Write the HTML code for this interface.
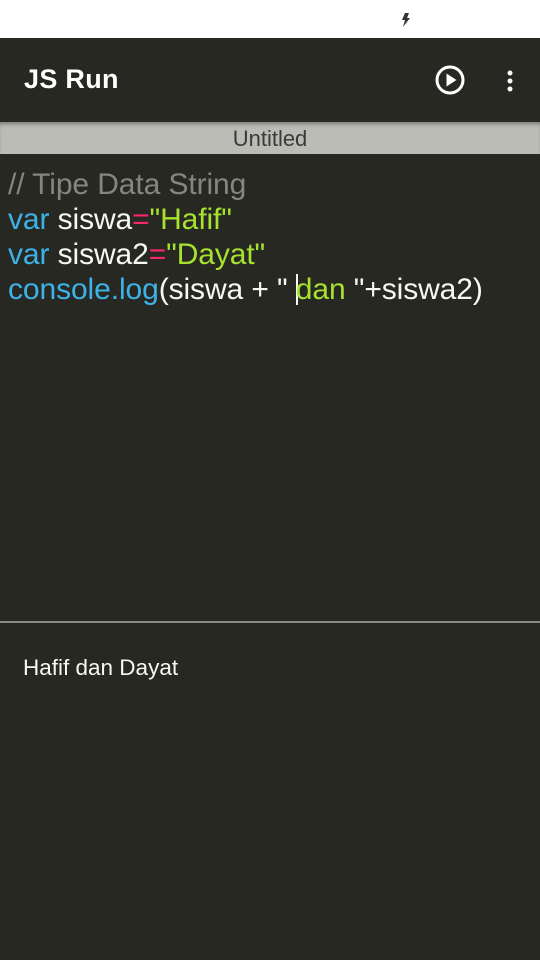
<!DOCTYPE html>
<html><head><style>
body{margin:0;width:540px;height:960px;background:#272822;font-family:"Liberation Sans",sans-serif;overflow:hidden;position:relative}
.status{position:absolute;top:0;left:0;width:540px;height:38px;background:#fff}
.bar{position:absolute;top:38px;left:0;width:540px;height:84px;background:#272822}
.title{position:absolute;left:24px;top:64px;color:#fff;font-size:27px;font-weight:bold;letter-spacing:0.3px}
.tab{position:absolute;top:122px;left:0;width:540px;height:32px;background:#bbbcb6;color:#3a3a3a;font-size:22px;text-align:center;line-height:34px;box-shadow:inset 0 4px 4px -2px rgba(0,0,0,.35)}
.code{position:absolute;left:8px;top:167px;font-size:30px;line-height:35px;color:#f8f8f2;white-space:pre;letter-spacing:-0.1px}
.c{color:#85867f}.k{color:#3db2e8}.s{color:#a6e22e}.o{color:#f92672}
.cur{display:inline-block;width:2px;height:31px;background:#f8f8f2;vertical-align:-6px;margin-right:-2px}
.sep{position:absolute;top:621px;left:0;width:540px;height:2px;background:#8a8a86}
.out{position:absolute;left:23px;top:655px;color:#f8f8f2;font-size:22.5px}
</style></head><body>
<div class="status"><svg style="position:absolute;left:400px;top:12px" width="12" height="16" viewBox="0 0 12 16"><path d="M5 1h4L7 6h3L3 15l2-7H2z" fill="#333"/></svg></div>
<div class="bar"></div>
<div class="title">JS Run</div>
<svg style="position:absolute;left:434px;top:64px" width="32" height="32" viewBox="0 0 32 32"><circle cx="16" cy="16" r="13" fill="none" stroke="#fff" stroke-width="3"/><path d="M12.5 9.5v13l10-6.5z" fill="#fff"/></svg>
<svg style="position:absolute;left:506px;top:70px" width="8" height="22" viewBox="0 0 8 22"><circle cx="4" cy="3" r="2.5" fill="#fff"/><circle cx="4" cy="11" r="2.5" fill="#fff"/><circle cx="4" cy="19" r="2.5" fill="#fff"/></svg>
<div class="tab">Untitled</div>
<div class="code"><span class="c">// Tipe Data String</span>
<span class="k">var</span> siswa<span class="o">=</span><span class="s">"Hafif"</span>
<span class="k">var</span> siswa2<span class="o">=</span><span class="s">"Dayat"</span>
<span class="k">console.log</span>(siswa + " <span class="cur"></span><span class="s">dan </span>"+siswa2)</div>
<div class="sep"></div>
<div class="out">Hafif dan Dayat</div>
</body></html>
